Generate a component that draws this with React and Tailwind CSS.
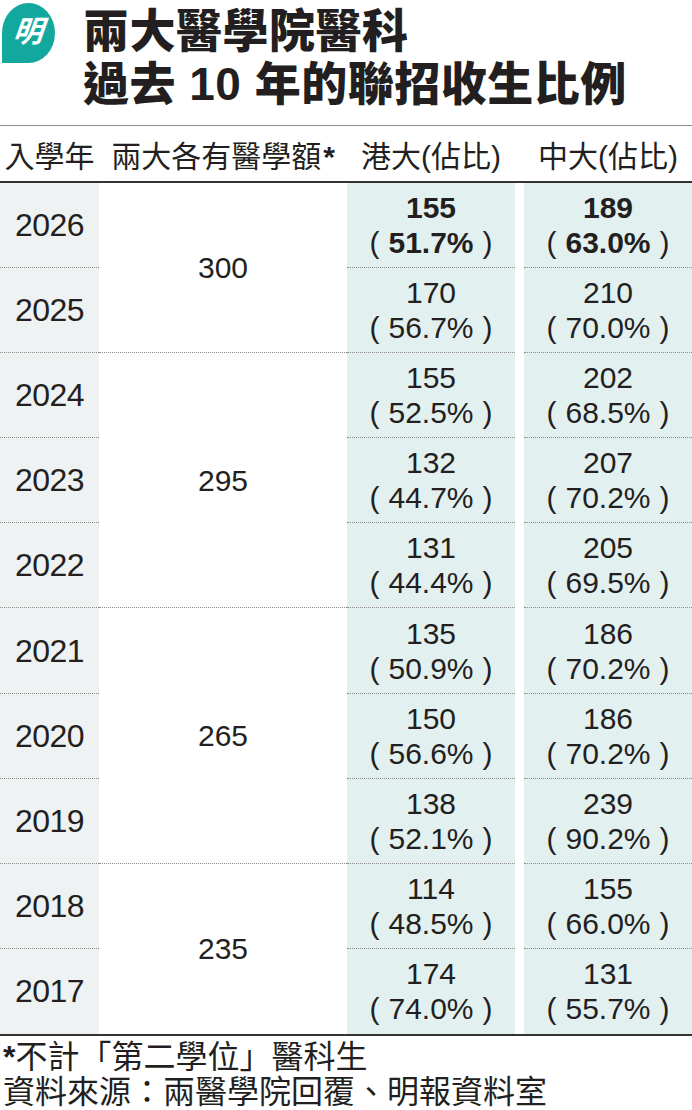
import React from 'react';

const rows = [
  { year: 2026, hku: 155, hkuP: '51.7%', cu: 189, cuP: '63.0%', bold: true },
  { year: 2025, hku: 170, hkuP: '56.7%', cu: 210, cuP: '70.0%' },
  { year: 2024, hku: 155, hkuP: '52.5%', cu: 202, cuP: '68.5%' },
  { year: 2023, hku: 132, hkuP: '44.7%', cu: 207, cuP: '70.2%' },
  { year: 2022, hku: 131, hkuP: '44.4%', cu: 205, cuP: '69.5%' },
  { year: 2021, hku: 135, hkuP: '50.9%', cu: 186, cuP: '70.2%' },
  { year: 2020, hku: 150, hkuP: '56.6%', cu: 186, cuP: '70.2%' },
  { year: 2019, hku: 138, hkuP: '52.1%', cu: 239, cuP: '90.2%' },
  { year: 2018, hku: 114, hkuP: '48.5%', cu: 155, cuP: '66.0%' },
  { year: 2017, hku: 174, hkuP: '74.0%', cu: 131, cuP: '55.7%' },
];

// first row index of each quota group -> quota cell
const quota = {
  0: { value: 300, span: 'row-span-2', last: false },
  2: { value: 295, span: 'row-span-3', last: false },
  5: { value: 265, span: 'row-span-3', last: false },
  8: { value: 235, span: 'row-span-2', last: true },
};

const font = "font-['Liberation_Sans','Noto_Sans_CJK_TC',sans-serif]";
const dotted = 'border-b border-dotted border-[#8a8a8a]';

const Value = ({ n, p, bold }) => (
  <div className="h-full flex flex-col items-center justify-center leading-[35px] text-[30px]">
    <span className={bold ? 'font-bold' : ''}>{n}</span>
    <span>
      <span className="font-normal">(</span>
      <span className={bold ? 'font-bold mx-[9px]' : 'mx-[9px]'}>{p}</span>
      <span className="font-normal">)</span>
    </span>
  </div>
);

export default function App() {
  return (
    <div className={`w-[692px] h-[1110px] bg-white text-[#231f20] overflow-hidden ${font}`}>
      {/* Title */}
      <div className="flex items-start">
        <div className="ml-[2px] mt-[3px] w-[53px] h-[60px] rounded-[50%] rounded-bl-none bg-[#13a89e] flex items-center justify-center flex-shrink-0">
          <span className="text-white text-[30px] font-bold italic -skew-x-6 leading-none -mt-[3px] -ml-[2px]">明</span>
        </div>
        <div className="ml-[28px] pt-[5px] text-[46px] leading-[53px] font-black tracking-[0.5px]">
          <div>兩大醫學院醫科</div>
          <div>過去 <span className="font-bold">10</span> 年的聯招收生比例</div>
        </div>
      </div>

      {/* Header */}
      <div className="mt-[14px] h-[58px] border-t border-[#8c8c8c] border-b-2 border-b-[#333] grid grid-cols-[99px_248px_168px_177px] text-[30px] pt-[6px]">
        <div className="flex items-center justify-center">入學年</div>
        <div className="flex items-center justify-center">兩大各有醫學額<span className="font-bold ml-[2px]">*</span></div>
        <div className="flex items-center justify-center">港大(佔比)</div>
        <div className="flex items-center justify-center pl-[9px]">中大(佔比)</div>
      </div>

      {/* Table */}
      <div className="grid grid-cols-[99px_248px_168px_177px] auto-rows-[85.1px]">
        {rows.map((r, i) => {
          const last = i === rows.length - 1;
          const q = quota[i];
          return (
            <React.Fragment key={r.year}>
              <div className={`bg-[#eef2f3] flex items-center justify-center text-[32px] tracking-[-0.5px] ${last ? '' : dotted}`}>
                {r.year}
              </div>
              {q && (
                <div className={`${q.span} flex items-center justify-center text-[30px] ${q.last ? '' : dotted}`}>
                  {q.value}
                </div>
              )}
              <div className={`bg-[#e3f0f0] ${last ? '' : dotted}`}>
                <Value n={r.hku} p={r.hkuP} bold={r.bold} />
              </div>
              <div className="pl-[9px]">
                <div className={`h-full bg-[#e3f0f0] ${last ? '' : dotted}`}>
                  <Value n={r.cu} p={r.cuP} bold={r.bold} />
                </div>
              </div>
            </React.Fragment>
          );
        })}
      </div>

      {/* Footer */}
      <div className="border-t-2 border-[#333] pt-[4px] pl-[3px] text-[32px] leading-[35px]">
        <div><span className="font-bold">*</span>不計「第二學位」醫科生</div>
        <div>資料來源：兩醫學院回覆、明報資料室</div>
      </div>
    </div>
  );
}
